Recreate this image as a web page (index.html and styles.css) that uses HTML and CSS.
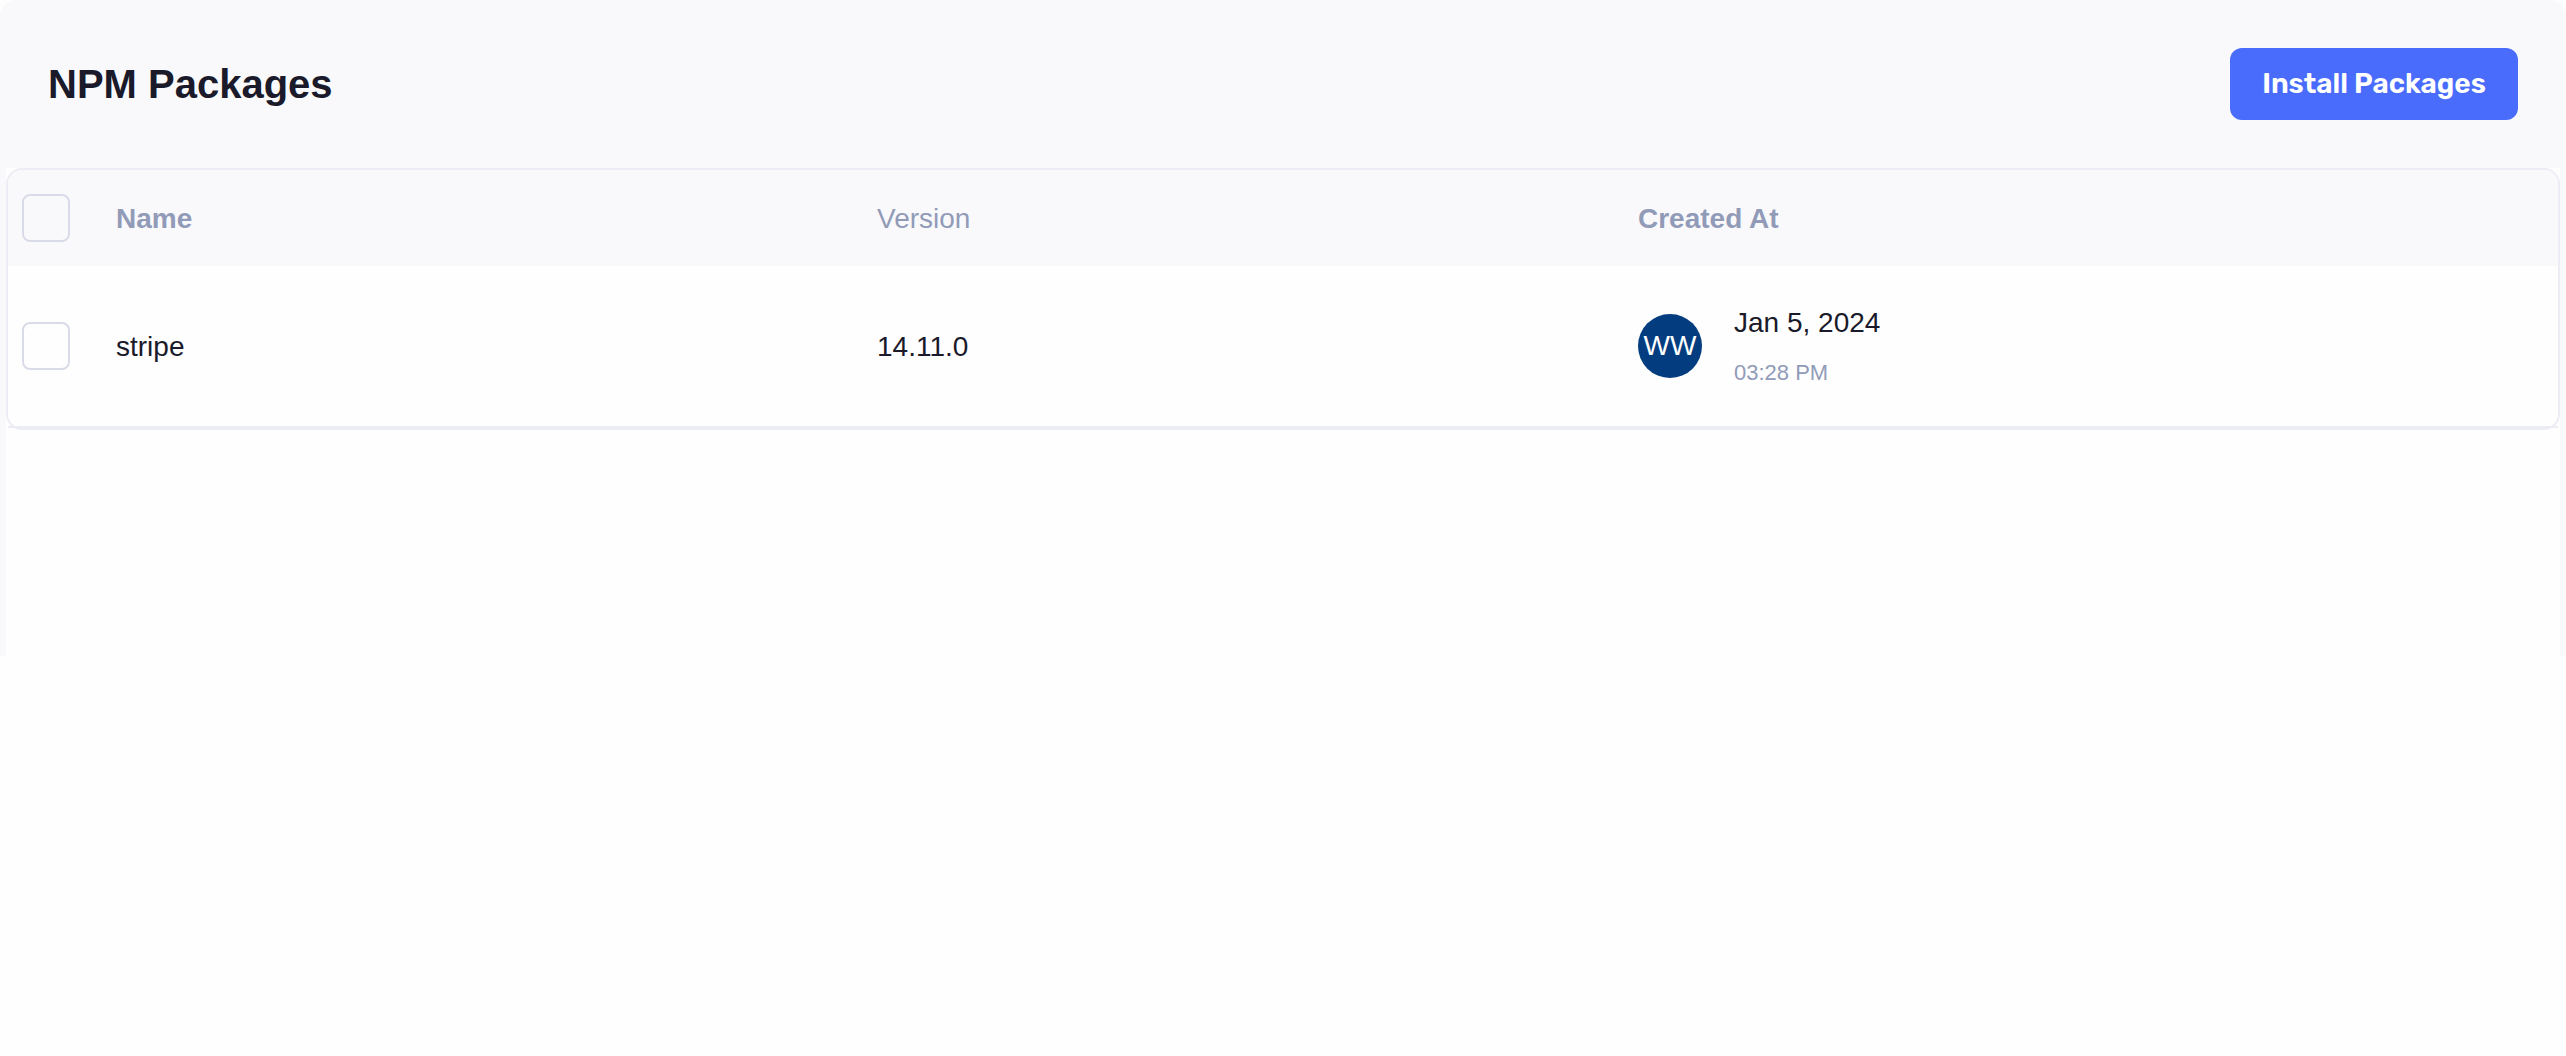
FILE: index.html
```html
<!DOCTYPE html>
<html lang="en">
<head>
  <meta charset="utf-8">
  <meta name="viewport" content="width=device-width, initial-scale=1">
  <title>NPM Packages</title>
  <link rel="stylesheet" href="styles.css">
</head>
<body>
  <main class="panel">
    <header class="panel-header">
      <h1 class="panel-title">NPM Packages</h1>
      <button class="button-primary" type="button">Install Packages</button>
    </header>
    <section class="list">
      <table class="packages">
        <colgroup>
          <col class="col-select">
          <col>
          <col>
          <col>
          <col class="col-actions">
        </colgroup>
        <thead>
          <tr>
            <td class="cell-select"><input class="checkbox" type="checkbox" aria-label="Select all packages"></td>
            <th scope="col">Name</th>
            <th class="unsorted" scope="col">Version</th>
            <th scope="col">Created At</th>
            <td></td>
          </tr>
        </thead>
        <tbody>
          <tr>
            <td class="cell-select"><input class="checkbox" type="checkbox" aria-label="Select stripe"></td>
            <td class="cell-text">stripe</td>
            <td class="cell-text">14.11.0</td>
            <td>
              <div class="created">
                <span class="avatar">WW</span>
                <div class="created-when">
                  <span>Jan 5, 2024</span>
                  <span class="created-time">03:28 PM</span>
                </div>
              </div>
            </td>
            <td></td>
          </tr>
        </tbody>
      </table>
    </section>
  </main>
</body>
</html>
```
FILE: styles.css
```css
* {
  box-sizing: border-box;
}

body {
  margin: 0;
  background: #fefefe;
  color: #1a1a2a;
  font: 28px/32px "Liberation Sans", Arial, sans-serif;
}

.panel {
  padding: 0 6px;
  border-radius: 16px 16px 0 0;
  background: #f9f9fc;
}

.panel-header {
  display: flex;
  align-items: center;
  justify-content: space-between;
  padding: 48px 42px;
}

.panel-title {
  margin: 0;
  font-size: 40px;
  line-height: 48px;
}

.button-primary {
  min-width: 288px;
  height: 72px;
  padding: 0 24px;
  border: 0;
  border-radius: 12px;
  background: #4a6cfd;
  color: #fff;
  font: 600 28px/32px Rubik, Inter, sans-serif;
  cursor: pointer;
}

.list {
  min-height: 488px;
  background: #fefefe;
}

.packages {
  width: 100%;
  table-layout: fixed;
  border: 2px solid #ececf4;
  border-radius: 16px;
  border-spacing: 0;
}

.col-select {
  width: 92px;
}

.col-actions {
  width: 175px;
}

.packages th,
.packages td {
  padding: 0 16px;
  text-align: left;
  vertical-align: middle;
}

.packages thead th,
.packages thead td {
  height: 96px;
  background: #f9f9fc;
  color: #919bb8;
}

.packages thead td:first-child {
  border-top-left-radius: 14px;
}

.packages thead td:last-child {
  border-top-right-radius: 14px;
}

.packages .unsorted {
  font-weight: 400;
}

.packages tbody td {
  height: 162px;
  border-bottom: 2px solid #ececf4;
}

.packages th,
.packages .cell-text {
  padding-top: 2px;
}

.packages .cell-select {
  padding: 0 14px;
}

.checkbox {
  display: block;
  width: 48px;
  height: 48px;
  margin: 0;
  border: 2px solid #d9dce8;
  border-radius: 8px;
  appearance: none;
}

.checkbox:checked {
  background: #4a6cfd;
}

.created {
  display: flex;
  align-items: center;
  gap: 32px;
}

.avatar {
  display: flex;
  align-items: center;
  justify-content: center;
  width: 64px;
  height: 64px;
  border-radius: 50%;
  background: #033d80;
  color: #fff;
}

.created-when {
  display: flex;
  flex-direction: column;
  gap: 18px;
  padding-top: 4px;
}

.created-time {
  color: #919bb8;
  font-size: 22px;
}
```
